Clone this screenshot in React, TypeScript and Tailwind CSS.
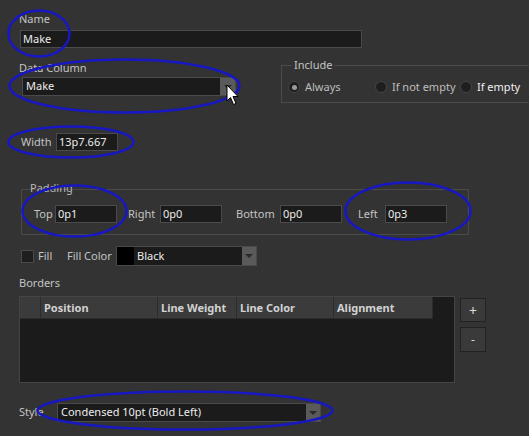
import React from 'react';

const INPUT =
  'h-[18px] bg-[#1b1b1b] border border-[#4a4a4a] text-[#ececec] px-[2px] leading-[16px] text-[11px] whitespace-nowrap';

function DropButton({ className }: { className?: string }) {
  return (
    <div className={`flex items-center justify-center bg-[#5a5a5a] ${className ?? ''}`}>
      <div className="w-0 h-0 border-l-[4px] border-r-[4px] border-t-[4px] border-l-transparent border-r-transparent border-t-[#2a2a2a]" />
    </div>
  );
}

function Radio({ label, checked, bright, className }: { label: string; checked?: boolean; bright?: boolean; className?: string }) {
  return (
    <div className={`flex items-center gap-[5px] shrink-0 whitespace-nowrap ${className ?? ''}`}>
      <div className="shrink-0 w-[12px] h-[12px] rounded-full bg-[#1e1e1e] border border-[#454545] flex items-center justify-center">
        {checked && <div className="w-[5px] h-[5px] rounded-full bg-[#9a9a9a]" />}
      </div>
      <span className={bright ? 'text-[#f0f0f0]' : 'text-[#bdbdbd]'}>{label}</span>
    </div>
  );
}

const COLUMNS = [
  { label: '', w: 'w-[21px]' },
  { label: 'Position', w: 'w-[117px]' },
  { label: 'Line Weight', w: 'w-[79px]' },
  { label: 'Line Color', w: 'w-[97px]' },
  { label: 'Alignment', w: 'w-[99px]' },
];

export default function App() {
  return (
    <div className="relative w-[529px] h-[436px] overflow-hidden bg-[#333333] font-['Noto_Sans',sans-serif] text-[11px] text-[#c4c4c4] pl-[19px] pt-[12px]">
      {/* Name */}
      <div className="h-[14px] leading-[14px]">Name</div>
      <div className={`${INPUT} mt-[4px] ml-[1px] w-[342px]`}>Make</div>

      {/* Data column + include */}
      <div className="flex mt-[13px]">
        <div className="w-[262px] shrink-0">
          <div className="h-[14px] leading-[14px]">Data Column</div>
          <div className="mt-[2px] ml-[3px] w-[214px] h-[19px] bg-[#1b1b1b] border border-[#4a4a4a] flex items-center text-[#ececec]">
            <span className="flex-1 pl-[3px]">Make</span>
            <DropButton className="w-[15px] h-[17px]" />
          </div>
        </div>
        <div className="relative shrink-0 mt-[4px] w-[252px] h-[38px] border border-[#4a4a4a] flex items-center pl-[6px] pt-[6px]">
          <span className="absolute -top-[8px] left-[10px] px-[2px] bg-[#333333] leading-[14px]">Include</span>
          <Radio label="Always" checked className="w-[87px]" />
          <Radio label="If not empty" className="w-[85px]" />
          <Radio label="If empty" bright />
        </div>
      </div>

      {/* Width */}
      <div className="flex items-center mt-[30px] ml-[2px]">
        <span className="w-[35px]">Width</span>
        <div className={`${INPUT} w-[62px]`}>13p7.667</div>
      </div>

      {/* Padding */}
      <div className="relative mt-[38px] ml-[2px] w-[448px] h-[46px] border border-[#4a4a4a] flex items-center pl-[12px] pt-[4px]">
        <span className="absolute -top-[9px] left-[8px] leading-[14px] text-[#b8b8b8]">Padding</span>
        <span className="w-[21px]">Top</span>
        <div className={`${INPUT} w-[62px]`}>0p1</div>
        <span className="ml-[11px] w-[32px]">Right</span>
        <div className={`${INPUT} w-[62px]`}>0p0</div>
        <span className="ml-[14px] w-[44px]">Bottom</span>
        <div className={`${INPUT} w-[62px]`}>0p0</div>
        <span className="ml-[16px] w-[27px]">Left</span>
        <div className={`${INPUT} w-[62px]`}>0p3</div>
      </div>

      {/* Fill */}
      <div className="flex items-center mt-[11px] h-[20px] ml-[2px]">
        <div className="w-[13px] h-[13px] bg-[#1e1e1e] border border-[#4a4a4a]" />
        <span className="ml-[4px] w-[29px]">Fill</span>
        <span className="w-[49px]">Fill Color</span>
        <div className="w-[141px] h-[20px] bg-[#1b1b1b] border border-[#4a4a4a] flex items-center text-[#ececec]">
          <div className="w-[17px] h-full bg-black" />
          <span className="flex-1 pl-[3px]">Black</span>
          <DropButton className="w-[14px] h-[18px]" />
        </div>
      </div>

      {/* Borders */}
      <div className="mt-[10px] h-[14px] leading-[14px]">Borders</div>
      <div className="flex mt-[6px]">
        <div className="w-[436px] h-[87px] bg-[#1b1b1b] border border-[#444444]">
          <div className="flex h-[22px]">
            {COLUMNS.map((c, i) => (
              <div
                key={i}
                className={`${c.w} h-full bg-[#3b3b3b] border-r border-b border-[#2c2c2c] font-bold text-[#d2d2d2] pl-[3px] leading-[21px]`}
              >
                {c.label}
              </div>
            ))}
          </div>
        </div>
        <div className="ml-[5px] flex flex-col gap-[5px] pt-[2px]">
          <div className="w-[26px] h-[24px] bg-[#3a3a3a] border border-[#222] flex items-center justify-center text-[#dcdcdc] text-[14px]">+</div>
          <div className="w-[26px] h-[25px] bg-[#3a3a3a] border border-[#222] flex items-center justify-center text-[#dcdcdc] text-[12px]">-</div>
        </div>
      </div>

      {/* Style */}
      <div className="flex items-center mt-[20px]">
        <span className="w-[38px]">Style</span>
        <div className="w-[264px] h-[19px] bg-[#1b1b1b] border border-[#4a4a4a] flex items-center text-[#ececec]">
          <span className="flex-1 pl-[3px]">Condensed 10pt (Bold Left)</span>
          <DropButton className="w-[14px] h-[17px]" />
        </div>
      </div>

      {/* Annotations */}
      <svg className="absolute inset-0 pointer-events-none" width="529" height="436" viewBox="0 0 529 436">
        <g fill="none" stroke="#1717c4" strokeWidth="2.5">
          <ellipse cx="39" cy="33.5" rx="30.5" ry="23" />
          <ellipse cx="124.5" cy="86" rx="115" ry="26.5" />
          <ellipse cx="71" cy="142" rx="62.5" ry="15.5" />
          <ellipse cx="74.5" cy="211" rx="52" ry="25.5" />
          <ellipse cx="408" cy="211" rx="62.5" ry="28.5" />
          <ellipse cx="185" cy="410.5" rx="147.5" ry="19" />
        </g>
        <path
          d="M227 85 L227 101 L230.5 97.5 L233.5 104.5 L236 103.5 L233 96.5 L238 96.5 Z"
          fill="#ffffff"
          stroke="#000000"
          strokeWidth="1"
          strokeLinejoin="round"
        />
      </svg>
    </div>
  );
}
